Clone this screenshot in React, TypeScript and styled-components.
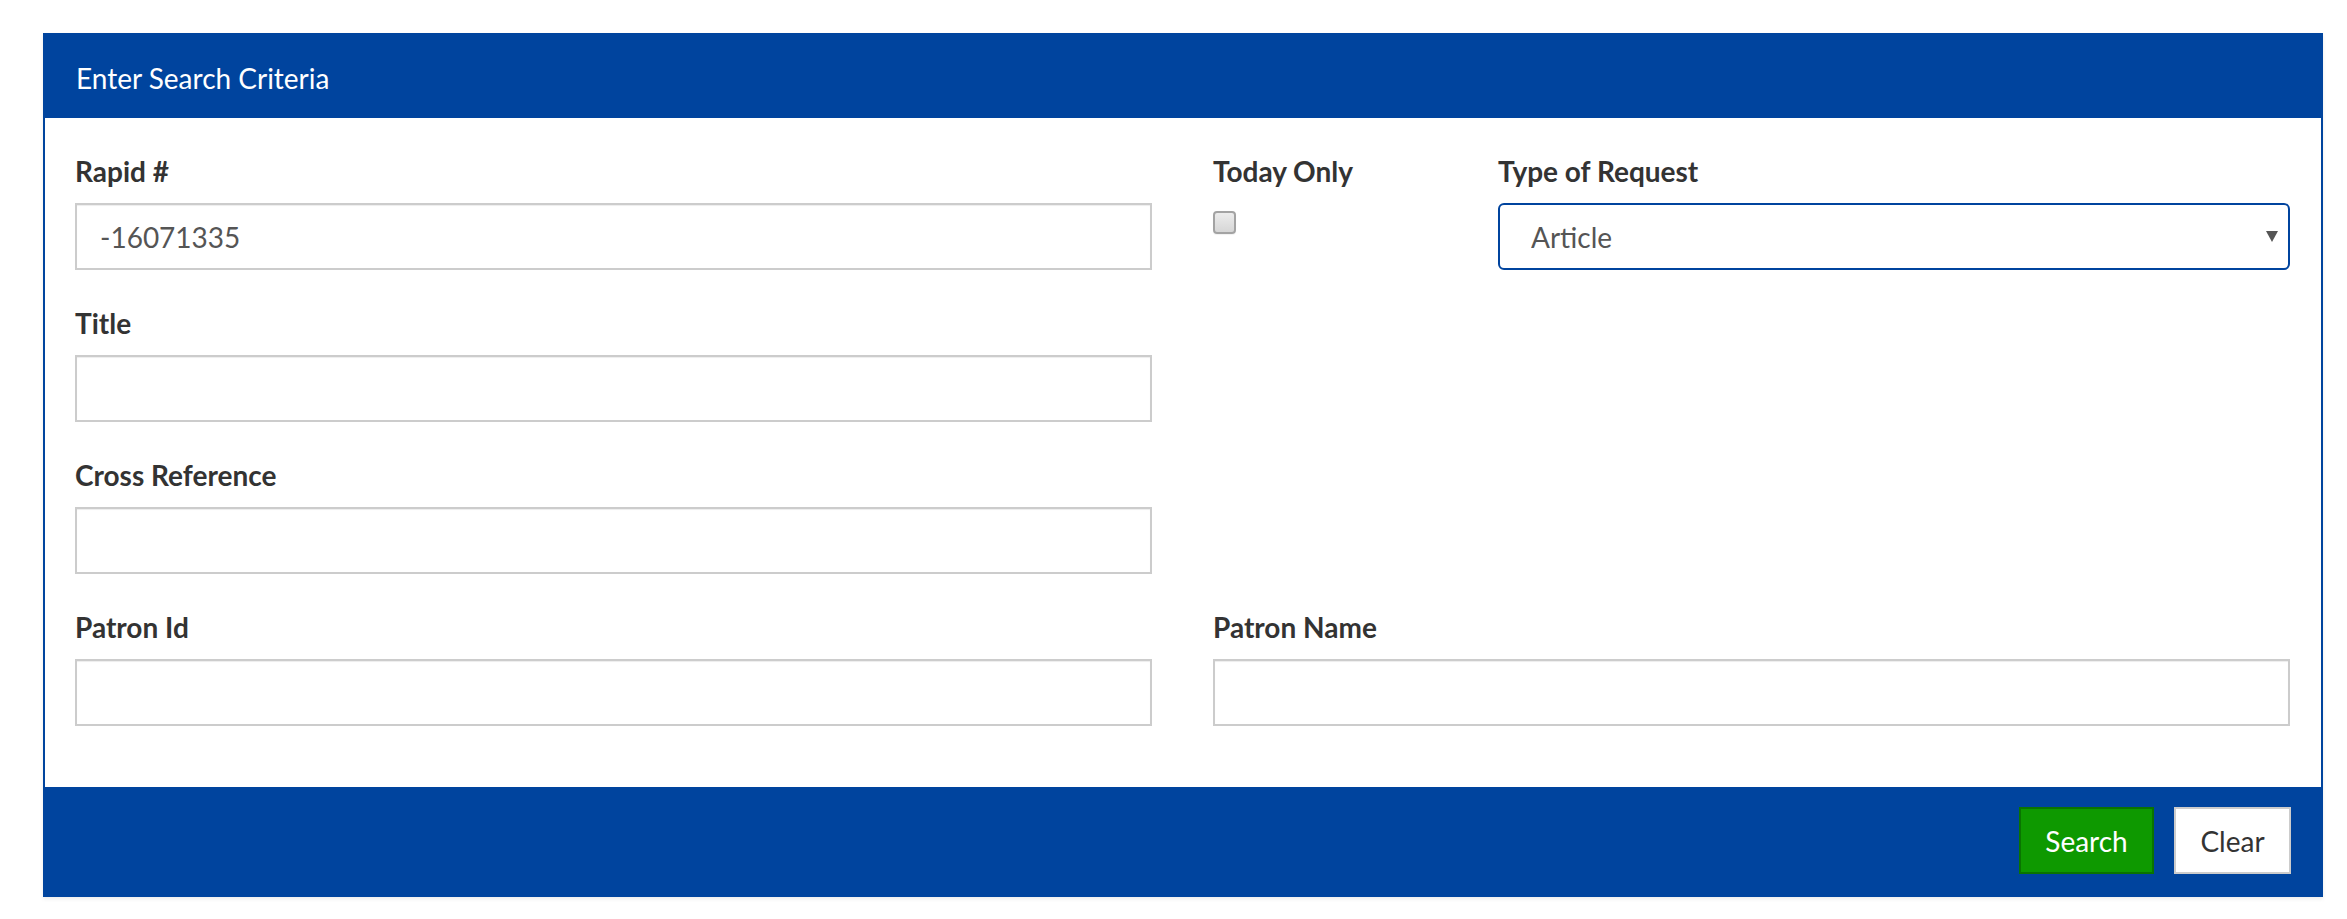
import React, { useState } from "react";
import styled, { createGlobalStyle } from "styled-components";

const blue = "#00449e";

const GlobalStyle = createGlobalStyle`
  html, body {
    margin: 0;
    padding: 0;
    background: #ffffff;
  }
  body {
    font-family: Lato, "Open Sans", "Liberation Sans", sans-serif;
    color: #333333;
  }
  * {
    box-sizing: border-box;
  }
`;

const Page = styled.div`
  padding: 33px 0 22px 43px;
`;

const Panel = styled.div`
  width: 2280px;
  box-shadow: 0 2px 4px rgba(0, 0, 0, 0.08);
`;

const PanelHeader = styled.div`
  height: 85px;
  padding: 4px 0 0 33px;
  display: flex;
  align-items: center;
  background-color: ${blue};
  color: #ffffff;
  font-size: 28px;
`;

const PanelBody = styled.div`
  border-left: 2px solid ${blue};
  border-right: 2px solid ${blue};
  background: #ffffff;
  padding: 33px 31px 61px 30px;
  display: grid;
  grid-template-columns: 1fr 1fr;
  column-gap: 61px;
  row-gap: 33px;
`;

const SplitCol = styled.div`
  display: grid;
  grid-template-columns: 240px 1fr;
  column-gap: 45px;
`;

const FormGroup = styled.div`
  display: flex;
  flex-direction: column;
  align-items: flex-start;
`;

const Label = styled.label`
  display: block;
  font-size: 28px;
  font-weight: 700;
  line-height: 40px;
  height: 40px;
  margin-bottom: 12px;
  color: #333333;
`;

const TextInput = styled.input`
  width: 100%;
  height: 67px;
  border: 2px solid #cccccc;
  border-radius: 0;
  padding: 0 23px;
  font-family: inherit;
  font-size: 28px;
  color: #555555;
  background: #ffffff;
  box-shadow: inset 0 1px 1px rgba(0, 0, 0, 0.075);
  outline: none;
`;

const SelectWrap = styled.div`
  position: relative;
  width: 100%;
`;

const Select = styled.select`
  width: 100%;
  height: 67px;
  border: 2px solid ${blue};
  border-radius: 6px;
  padding: 0 40px 0 31px;
  font-family: inherit;
  font-size: 28px;
  color: #555555;
  background: #ffffff;
  appearance: none;
  -webkit-appearance: none;
  outline: none;
`;

const Caret = styled.span`
  position: absolute;
  right: 12px;
  top: 28px;
  width: 0;
  height: 0;
  border-left: 6px solid transparent;
  border-right: 6px solid transparent;
  border-top: 11px solid #555555;
  pointer-events: none;
`;

const Checkbox = styled.input`
  appearance: none;
  -webkit-appearance: none;
  width: 23px;
  height: 23px;
  margin: 8px 0 0 0;
  border: 2px solid #a3a3a3;
  border-radius: 4px;
  background: linear-gradient(#ececec, #d6d6d6);
  box-shadow: 0 1px 1px rgba(0, 0, 0, 0.06);
`;

const PanelFooter = styled.div`
  height: 110px;
  padding: 20px 32px 0 0;
  display: flex;
  justify-content: flex-end;
  align-items: flex-start;
  gap: 20px;
  background-color: ${blue};
`;

const Button = styled.button<{ $primary?: boolean }>`
  height: 67px;
  width: ${(p) => (p.$primary ? "135px" : "117px")};
  padding: 0;
  font-family: inherit;
  font-size: 28px;
  border-radius: 0;
  border: 2px solid ${(p) => (p.$primary ? "#0a7400" : "#cccccc")};
  background-color: ${(p) => (p.$primary ? "#0e9900" : "#ffffff")};
  color: ${(p) => (p.$primary ? "#ffffff" : "#333333")};
`;

function App() {
  const [rapid, setRapid] = useState("-16071335");
  const [type, setType] = useState("Article");

  return (
    <Page>
      <GlobalStyle />
      <Panel>
        <PanelHeader>Enter Search Criteria</PanelHeader>
        <PanelBody>
          <FormGroup>
            <Label>Rapid #</Label>
            <TextInput value={rapid} onChange={(e) => setRapid(e.target.value)} />
          </FormGroup>
          <SplitCol>
            <FormGroup>
              <Label>Today Only</Label>
              <Checkbox type="checkbox" />
            </FormGroup>
            <FormGroup>
              <Label>Type of Request</Label>
              <SelectWrap>
                <Select value={type} onChange={(e) => setType(e.target.value)}>
                  <option>Article</option>
                  <option>Loan</option>
                  <option>Book Chapter</option>
                </Select>
                <Caret />
              </SelectWrap>
            </FormGroup>
          </SplitCol>

          <FormGroup>
            <Label>Title</Label>
            <TextInput />
          </FormGroup>
          <div />

          <FormGroup>
            <Label>Cross Reference</Label>
            <TextInput />
          </FormGroup>
          <div />

          <FormGroup>
            <Label>Patron Id</Label>
            <TextInput />
          </FormGroup>
          <FormGroup>
            <Label>Patron Name</Label>
            <TextInput />
          </FormGroup>
        </PanelBody>
        <PanelFooter>
          <Button $primary>Search</Button>
          <Button>Clear</Button>
        </PanelFooter>
      </Panel>
    </Page>
  );
}

export default App;
